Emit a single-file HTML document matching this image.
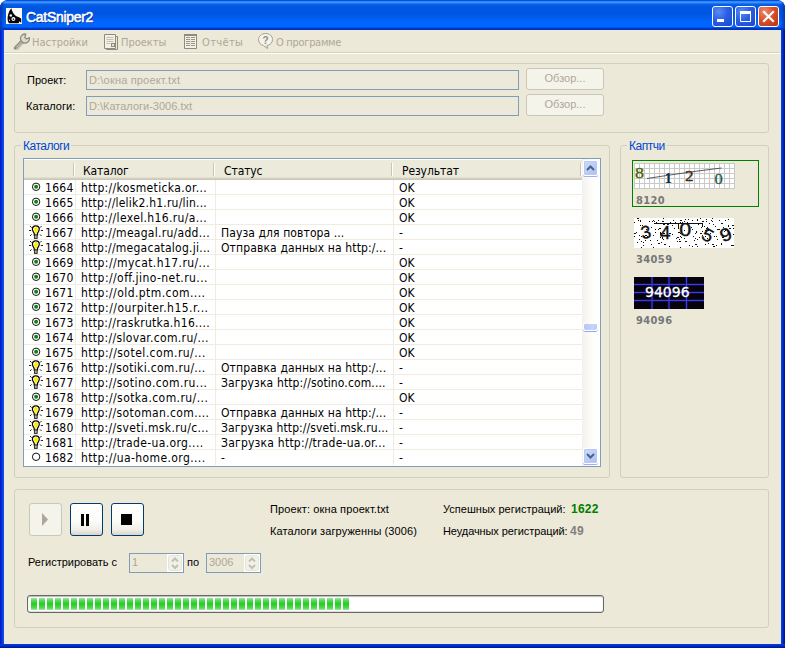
<!DOCTYPE html>
<html lang="ru"><head><meta charset="utf-8"><title>CatSniper2</title>
<style>
*{box-sizing:border-box;margin:0;padding:0}
html,body{width:785px;height:648px;overflow:hidden;background:#fff}
body{position:relative;font-family:"Liberation Sans",sans-serif;font-size:11px;color:#000}
.abs{position:absolute}
#win{position:absolute;left:0;top:0;width:785px;height:648px;background:#0831d9;border-radius:8px 8px 0 0;overflow:hidden}
#title{position:absolute;left:0;top:0;width:785px;height:30px;border-radius:8px 8px 0 0;
background:linear-gradient(to bottom,#0046dc 0,#0a52e0 .8px,#3088f8 1.500px,#409aff 2.300px,#2a84f8 3px,#0c66ea 4px,#035be3 5px,#0055e0 8px,#0056e3 14px,#0060f2 19px,#0066ff 22.500px,#0065fd 26.500px,#0054ea 27.500px,#0036c6 28.500px,#002fbe 30px)}
#title:before{content:"";position:absolute;left:0;top:0;width:5px;height:30px;background:linear-gradient(to right,#0138b8,rgba(20,90,230,0));border-radius:8px 0 0 0}
#title:after{content:"";position:absolute;right:0;top:0;width:5px;height:30px;background:linear-gradient(to left,#0138b8,rgba(20,90,230,0));border-radius:0 8px 0 0}
#ttext{position:absolute;left:26px;top:9px;font:14px/16px "Liberation Sans",sans-serif;color:#fff;-webkit-text-stroke:.55px #fff;text-shadow:1px 1px 0 #0a1f80;letter-spacing:-.3px;white-space:nowrap}
#client{position:absolute;left:4px;top:30px;width:777px;height:614px;background:#ece9d8}
#bl{position:absolute;left:0;top:30px;width:4px;height:618px;background:linear-gradient(to right,#0019cf,#0733dc 50%,#1a55ea)}
#br{position:absolute;right:0;top:30px;width:4px;height:618px;background:linear-gradient(to left,#00138c 0,#001a9e 30%,#0034d4 60%,#0644ea 100%)}
#bb{position:absolute;left:0;bottom:0;width:785px;height:4px;background:linear-gradient(to bottom,#0540e0,#0029c8 50%,#00138c)}
.tb{position:absolute;top:6px;width:21px;height:21px;border:1px solid #fff;border-radius:3px;background:radial-gradient(circle at 30% 25%,#5a8cf5 0,#2a5fe4 45%,#1a46cf 100%)}
.tb.x{background:radial-gradient(circle at 30% 25%,#ee8b6c 0,#d9512c 45%,#b93210 100%)}
#tbar{position:absolute;left:4px;top:30px;width:777px;height:24px;background:#ece9d8;border-bottom:1px solid #fff}
#tbar:after{content:"";position:absolute;left:0;bottom:0;width:100%;height:1px;background:#d8d4c4}
.tl{position:absolute;top:36px;color:#aca899;font:11px "DejaVu Sans Condensed","DejaVu Sans",sans-serif;white-space:nowrap}
.gb{position:absolute;border:1px solid #d0d0bf;border-radius:3px}
.lg{position:absolute;background:#ece9d8;color:#0046d5;padding:0 2px;white-space:nowrap;font-size:12px;letter-spacing:-.5px}
.inp{position:absolute;height:20px;border:1px solid #7f9db9;background:#ece9d8;color:#aca899;padding:3px 0 0 2px;white-space:nowrap}
.btn{position:absolute;width:78px;height:22px;border:1px solid #c9c7ba;border-radius:3px;background:#f5f4ea;color:#aca899;text-align:center;padding-top:3px}
.lb{position:absolute;white-space:nowrap}
#lv{position:absolute;left:23px;top:158px;width:578px;height:309px;border:1px solid #7f9db9;background:#fff}
#hdr{position:absolute;left:24px;top:160px;width:558px;height:20px;background:#ebeadb;border-bottom:1px solid #cbc7b8;box-shadow:inset 0 -1px 0 #d6d2c2,inset 0 -2px 0 #e2dece}
.hs{position:absolute;top:163px;width:2px;height:13px;border-left:1px solid #c7c5b2;border-right:1px solid #fff}
.ht{position:absolute;top:164px;font:12px "DejaVu Sans Condensed","DejaVu Sans",sans-serif;white-space:nowrap;letter-spacing:-.1px}
.row{position:absolute;left:24px;width:558px;height:15px;border-bottom:1px solid #f0ede0;font:12px "DejaVu Sans Condensed","DejaVu Sans",sans-serif}
.vl{position:absolute;top:180px;width:1px;height:285px;background:#f0ede0}
.c{position:absolute;top:1px;white-space:nowrap;line-height:14px}
.c0{letter-spacing:.3px}
.c0{left:21px}.c1{left:57px}.c2{left:197px}.c3{left:375px}
.ic{position:absolute}
#sb{position:absolute;left:582px;top:159px;width:18px;height:307px;background:linear-gradient(to right,#f3f1ec,#fefefb 60%,#fff)}
.sbb{position:absolute;left:583px;width:15px;height:16px;border-radius:2px;background:linear-gradient(135deg,#d0dcfd,#b8caf8 60%,#aebff0);border:1px solid #fff;box-shadow:0 0 0 1px #b9c9f3 inset,0 1px 0 #9db3ea}
.pbtn{position:absolute;top:503px;width:33px;height:33px;border:1px solid #003c74;border-radius:3px;background:linear-gradient(to bottom,#fff 0,#fbfbf8 55%,#f1f0e8 82%,#d9d4c8 100%)}
.pbtn.dis{border-color:#c9c7ba;background:#f5f4ea}
.spin{position:absolute;top:553px;width:55px;height:20px;border:1px solid #7f9db9;background:#ece9d8;color:#aca899;padding:2px 0 0 2px}
.spin b{position:absolute;right:0;top:0;width:16px;height:18px;background:#fff}
.spin b svg{position:absolute;left:1px;top:1px}
#pb{position:absolute;left:27px;top:595px;width:577px;height:18px;border:1px solid #686868;border-radius:3px;background:#fff;box-shadow:inset 0 1px 1px #bbb, inset 0 -1px 0 #ddd}
#pb i{position:absolute;top:2px;width:6px;height:12px;background:linear-gradient(to bottom,#9be89b 0,#4fd74f 25%,#22cc22 50%,#4fd74f 80%,#9be89b 100%)}
.cl{position:absolute;left:636px;font:bold 11px "DejaVu Sans Condensed","DejaVu Sans",sans-serif;color:#777;white-space:nowrap;letter-spacing:.4px}
</style></head><body>
<div id="win">
<div id="title"></div>
<div id="bl"></div><div id="br"></div><div id="bb"></div>
<div id="client"></div>
<!-- app icon -->
<svg class="abs" style="left:6px;top:8px" width="16" height="16" viewBox="0 0 16 16"><rect width="16" height="16" fill="#fbfaf6"/><path d="M5.300 .3C6 3 7.500 6.500 10 8c2 1.200 4 1.600 5.200 2.500V15l-1.700-1.800-1 2H3C1.500 13.500 1.300 11 1.800 8S3.800 2 5.300 .3z" fill="#050505"/><circle cx="4.800" cy="7.600" r="1.250" fill="#f4f4f4"/><circle cx="7.400" cy="10.900" r="2" fill="#f4f4f4"/><circle cx="7.400" cy="11.200" r=".8" fill="#111"/><circle cx="3.500" cy="12.200" r=".6" fill="#eee"/></svg>
<div id="ttext">CatSniper2</div>
<div class="tb" style="left:712px"><svg width="19" height="19"><rect x="4" y="12" width="7" height="3" fill="#fff"/></svg></div>
<div class="tb" style="left:735px"><svg width="19" height="19"><path d="M4.500 5.500h10v9h-10z" fill="none" stroke="#fff" stroke-width="1"/><rect x="4" y="4" width="11" height="3" fill="#fff"/></svg></div>
<div class="tb x" style="left:758px"><svg width="19" height="19"><path d="M5 5l9 9M14 5l-9 9" stroke="#fff" stroke-width="2.200" stroke-linecap="square"/></svg></div>

<div id="tbar"></div>
<!-- toolbar icons -->
<svg class="abs" style="left:13px;top:33px" width="18" height="17" viewBox="0 0 18 17"><path d="M2.500 15.500l6.500-7" stroke="#c4c1b2" stroke-width="3.400" stroke-linecap="round" fill="none" transform="translate(.8,.6)"/><path d="M2 15l6.800-7" stroke="#8f8d82" stroke-width="2.600" stroke-linecap="round" fill="none"/><path d="M3 14.500l5.800-6" stroke="#cfccbe" stroke-width="1" fill="none"/><path d="M12.800 1.100A4.500 4.500 0 1 0 16.400 4.700L13.400 6 11.800 4.300z" fill="#dedbcd" stroke="#8f8d82" stroke-width="1.300" stroke-linejoin="round"/></svg>
<div class="tl" style="left:32px">Настройки</div>
<svg class="abs" style="left:103px;top:33px" width="17" height="17" viewBox="0 0 17 17"><path d="M1.500 1.500h11v14h-11z" fill="#f3f1e6" stroke="#8f8c7e"/><path d="M12.500 3.500h2v13h-11v-1" fill="none" stroke="#8f8c7e"/><path d="M3.500 4.500h7M3.500 6.500h7M3.500 8.500h7M3.500 10.500h4" stroke="#c5c2b3"/><rect x="8.500" y="10.500" width="3" height="3" fill="#e6e3d4" stroke="#8f8c7e"/></svg>
<div class="tl" style="left:121px">Проекты</div>
<svg class="abs" style="left:183px;top:33px" width="15" height="17" viewBox="0 0 15 17"><path d="M1.500 1.500h12v14h-12z" fill="#f3f1e6" stroke="#8f8c7e"/><path d="M3 4.500h9M3 6.500h9M3 8.500h9M3 10.500h9M3 12.500h9" stroke="#9a9788"/><path d="M7.500 4v9" stroke="#e8e5d6"/><rect x="1" y="1" width="13" height="2" fill="#8f8c7e"/></svg>
<div class="tl" style="left:202px;letter-spacing:.35px">Отчёты</div>
<svg class="abs" style="left:257px;top:32px" width="17" height="18" viewBox="0 0 17 18"><path d="M8.500 1.500c4 0 7 2.500 7 6s-2.500 5.500-5.500 6l.5 3-4-3c-3-.5-5-3-5-6s3-6 7-6z" fill="#f6f4ea" stroke="#a09d8e"/><text x="8.500" y="12" text-anchor="middle" font-family="Liberation Sans,sans-serif" font-weight="bold" font-size="10" fill="#8f8c7e">?</text></svg>
<div class="tl" style="left:276px;letter-spacing:-.3px">О программе</div>

<!-- group 1 -->
<div class="gb" style="left:14px;top:63px;width:755px;height:70px"></div>
<div class="lb" style="left:27px;top:74px">Проект:</div>
<div class="lb" style="left:26px;top:100px">Каталоги:</div>
<div class="inp" style="left:86px;top:70px;width:433px;letter-spacing:.18px">D:\окна проект.txt</div>
<div class="inp" style="left:86px;top:96px;width:433px">D:\Каталоги-3006.txt</div>
<div class="btn" style="left:526px;top:68px">Обзор...</div>
<div class="btn" style="left:526px;top:94px">Обзор...</div>

<!-- group 2 -->
<div class="gb" style="left:14px;top:145px;width:596px;height:333px"></div>
<div class="lg" style="left:21px;top:139px">Каталоги</div>
<div id="lv"></div>
<div id="hdr"></div>
<div class="hs" style="left:73px"></div><div class="hs" style="left:213px"></div><div class="hs" style="left:391px"></div><div class="hs" style="left:580px"></div>
<div class="ht" style="left:83px">Каталог</div><div class="ht" style="left:224px">Статус</div><div class="ht" style="left:402px">Результат</div>
<div class="row" style="top:180px"><svg class="ic" style="left:7px;top:2px" width="10" height="10" viewBox="0 0 10 10"><circle cx="5.100" cy="4.800" r="3.700" fill="#fff" stroke="#111" stroke-width="1"/><circle cx="5.100" cy="4.800" r="2" fill="#0a860a"/></svg><span class="c c0">1664</span><span class="c c1" style="letter-spacing:0.359px">http://kosmeticka.or...</span><span class="c c3">OK</span></div>
<div class="row" style="top:195px"><svg class="ic" style="left:7px;top:2px" width="10" height="10" viewBox="0 0 10 10"><circle cx="5.100" cy="4.800" r="3.700" fill="#fff" stroke="#111" stroke-width="1"/><circle cx="5.100" cy="4.800" r="2" fill="#0a860a"/></svg><span class="c c0">1665</span><span class="c c1" style="letter-spacing:0.210px">http://lelik2.h1.ru/lin...</span><span class="c c3">OK</span></div>
<div class="row" style="top:210px"><svg class="ic" style="left:7px;top:2px" width="10" height="10" viewBox="0 0 10 10"><circle cx="5.100" cy="4.800" r="3.700" fill="#fff" stroke="#111" stroke-width="1"/><circle cx="5.100" cy="4.800" r="2" fill="#0a860a"/></svg><span class="c c0">1666</span><span class="c c1" style="letter-spacing:0.363px">http://lexel.h16.ru/a...</span><span class="c c3">OK</span></div>
<div class="row" style="top:225px"><svg class="ic" style="left:4px;top:0px" width="16" height="15" viewBox="0 0 16 15"><path d="M2 1l1.600 1.600M13.600 1L12 2.600M1 5.500h2.200M12.800 5.500H15M2 11l1.600-1.600M13.600 11L12 9.400" stroke="#222" stroke-width="1" fill="none"/><path d="M7.800 .8c2.200 0 3.500 1.600 3.500 3.500 0 1.700-1.300 2.700-1.800 4.200V10H6.200V8.500C5.700 7 4.400 6 4.400 4.300c0-1.900 1.200-3.500 3.400-3.500z" fill="#fff" stroke="#000" stroke-width="1.200"/><path d="M7.800 1.500l2.300 2.100-.4 2.400-.9 1.600-.2 2H7V7L5.700 5l.9-2.400z" fill="#fbee08"/><rect x="6.400" y="10" width="2.800" height="3.400" fill="#aaa" stroke="#222" stroke-width=".9"/></svg><span class="c c0">1667</span><span class="c c1" style="letter-spacing:0.286px">http://meagal.ru/add...</span><span class="c c2" style="letter-spacing:0.100px">Пауза для повтора ...</span><span class="c c3">-</span></div>
<div class="row" style="top:240px"><svg class="ic" style="left:4px;top:0px" width="16" height="15" viewBox="0 0 16 15"><path d="M2 1l1.600 1.600M13.600 1L12 2.600M1 5.500h2.200M12.800 5.500H15M2 11l1.600-1.600M13.600 11L12 9.400" stroke="#222" stroke-width="1" fill="none"/><path d="M7.800 .8c2.200 0 3.500 1.600 3.500 3.500 0 1.700-1.300 2.700-1.800 4.200V10H6.200V8.500C5.700 7 4.400 6 4.400 4.300c0-1.900 1.200-3.500 3.400-3.500z" fill="#fff" stroke="#000" stroke-width="1.200"/><path d="M7.800 1.500l2.300 2.100-.4 2.400-.9 1.600-.2 2H7V7L5.700 5l.9-2.400z" fill="#fbee08"/><rect x="6.400" y="10" width="2.800" height="3.400" fill="#aaa" stroke="#222" stroke-width=".9"/></svg><span class="c c0">1668</span><span class="c c1" style="letter-spacing:0.250px">http://megacatalog.ji...</span><span class="c c2" style="letter-spacing:0.128px">Отправка данных на http:/...</span><span class="c c3">-</span></div>
<div class="row" style="top:255px"><svg class="ic" style="left:7px;top:2px" width="10" height="10" viewBox="0 0 10 10"><circle cx="5.100" cy="4.800" r="3.700" fill="#fff" stroke="#111" stroke-width="1"/><circle cx="5.100" cy="4.800" r="2" fill="#0a860a"/></svg><span class="c c0">1669</span><span class="c c1" style="letter-spacing:0.423px">http://mycat.h17.ru/...</span><span class="c c3">OK</span></div>
<div class="row" style="top:270px"><svg class="ic" style="left:7px;top:2px" width="10" height="10" viewBox="0 0 10 10"><circle cx="5.100" cy="4.800" r="3.700" fill="#fff" stroke="#111" stroke-width="1"/><circle cx="5.100" cy="4.800" r="2" fill="#0a860a"/></svg><span class="c c0">1670</span><span class="c c1" style="letter-spacing:0.433px">http://off.jino-net.ru...</span><span class="c c3">OK</span></div>
<div class="row" style="top:285px"><svg class="ic" style="left:7px;top:2px" width="10" height="10" viewBox="0 0 10 10"><circle cx="5.100" cy="4.800" r="3.700" fill="#fff" stroke="#111" stroke-width="1"/><circle cx="5.100" cy="4.800" r="2" fill="#0a860a"/></svg><span class="c c0">1671</span><span class="c c1" style="letter-spacing:0.440px">http://old.ptm.com....</span><span class="c c3">OK</span></div>
<div class="row" style="top:300px"><svg class="ic" style="left:7px;top:2px" width="10" height="10" viewBox="0 0 10 10"><circle cx="5.100" cy="4.800" r="3.700" fill="#fff" stroke="#111" stroke-width="1"/><circle cx="5.100" cy="4.800" r="2" fill="#0a860a"/></svg><span class="c c0">1672</span><span class="c c1" style="letter-spacing:0.476px">http://ourpiter.h15.r...</span><span class="c c3">OK</span></div>
<div class="row" style="top:315px"><svg class="ic" style="left:7px;top:2px" width="10" height="10" viewBox="0 0 10 10"><circle cx="5.100" cy="4.800" r="3.700" fill="#fff" stroke="#111" stroke-width="1"/><circle cx="5.100" cy="4.800" r="2" fill="#0a860a"/></svg><span class="c c0">1673</span><span class="c c1" style="letter-spacing:0.293px">http://raskrutka.h16....</span><span class="c c3">OK</span></div>
<div class="row" style="top:330px"><svg class="ic" style="left:7px;top:2px" width="10" height="10" viewBox="0 0 10 10"><circle cx="5.100" cy="4.800" r="3.700" fill="#fff" stroke="#111" stroke-width="1"/><circle cx="5.100" cy="4.800" r="2" fill="#0a860a"/></svg><span class="c c0">1674</span><span class="c c1" style="letter-spacing:0.337px">http://slovar.com.ru/...</span><span class="c c3">OK</span></div>
<div class="row" style="top:345px"><svg class="ic" style="left:7px;top:2px" width="10" height="10" viewBox="0 0 10 10"><circle cx="5.100" cy="4.800" r="3.700" fill="#fff" stroke="#111" stroke-width="1"/><circle cx="5.100" cy="4.800" r="2" fill="#0a860a"/></svg><span class="c c0">1675</span><span class="c c1" style="letter-spacing:0.459px">http://sotel.com.ru/...</span><span class="c c3">OK</span></div>
<div class="row" style="top:360px"><svg class="ic" style="left:4px;top:0px" width="16" height="15" viewBox="0 0 16 15"><path d="M2 1l1.600 1.600M13.600 1L12 2.600M1 5.500h2.200M12.800 5.500H15M2 11l1.600-1.600M13.600 11L12 9.400" stroke="#222" stroke-width="1" fill="none"/><path d="M7.800 .8c2.200 0 3.500 1.600 3.500 3.500 0 1.700-1.300 2.700-1.800 4.200V10H6.200V8.500C5.700 7 4.400 6 4.400 4.300c0-1.900 1.200-3.500 3.400-3.500z" fill="#fff" stroke="#000" stroke-width="1.200"/><path d="M7.800 1.500l2.300 2.100-.4 2.400-.9 1.600-.2 2H7V7L5.700 5l.9-2.400z" fill="#fbee08"/><rect x="6.400" y="10" width="2.800" height="3.400" fill="#aaa" stroke="#222" stroke-width=".9"/></svg><span class="c c0">1676</span><span class="c c1" style="letter-spacing:0.320px">http://sotiki.com.ru/...</span><span class="c c2" style="letter-spacing:0.128px">Отправка данных на http:/...</span><span class="c c3">-</span></div>
<div class="row" style="top:375px"><svg class="ic" style="left:4px;top:0px" width="16" height="15" viewBox="0 0 16 15"><path d="M2 1l1.600 1.600M13.600 1L12 2.600M1 5.500h2.200M12.800 5.500H15M2 11l1.600-1.600M13.600 11L12 9.400" stroke="#222" stroke-width="1" fill="none"/><path d="M7.800 .8c2.200 0 3.500 1.600 3.500 3.500 0 1.700-1.300 2.700-1.800 4.200V10H6.200V8.500C5.700 7 4.400 6 4.400 4.300c0-1.900 1.200-3.500 3.400-3.500z" fill="#fff" stroke="#000" stroke-width="1.200"/><path d="M7.800 1.500l2.300 2.100-.4 2.400-.9 1.600-.2 2H7V7L5.700 5l.9-2.400z" fill="#fbee08"/><rect x="6.400" y="10" width="2.800" height="3.400" fill="#aaa" stroke="#222" stroke-width=".9"/></svg><span class="c c0">1677</span><span class="c c1" style="letter-spacing:0.395px">http://sotino.com.ru...</span><span class="c c2" style="letter-spacing:0.129px">Загрузка http://sotino.com....</span><span class="c c3">-</span></div>
<div class="row" style="top:390px"><svg class="ic" style="left:7px;top:2px" width="10" height="10" viewBox="0 0 10 10"><circle cx="5.100" cy="4.800" r="3.700" fill="#fff" stroke="#111" stroke-width="1"/><circle cx="5.100" cy="4.800" r="2" fill="#0a860a"/></svg><span class="c c0">1678</span><span class="c c1" style="letter-spacing:0.432px">http://sotka.com.ru/...</span><span class="c c3">OK</span></div>
<div class="row" style="top:405px"><svg class="ic" style="left:4px;top:0px" width="16" height="15" viewBox="0 0 16 15"><path d="M2 1l1.600 1.600M13.600 1L12 2.600M1 5.500h2.200M12.800 5.500H15M2 11l1.600-1.600M13.600 11L12 9.400" stroke="#222" stroke-width="1" fill="none"/><path d="M7.800 .8c2.200 0 3.500 1.600 3.500 3.500 0 1.700-1.300 2.700-1.800 4.200V10H6.200V8.500C5.700 7 4.400 6 4.400 4.300c0-1.900 1.200-3.500 3.400-3.500z" fill="#fff" stroke="#000" stroke-width="1.200"/><path d="M7.800 1.500l2.300 2.100-.4 2.400-.9 1.600-.2 2H7V7L5.700 5l.9-2.400z" fill="#fbee08"/><rect x="6.400" y="10" width="2.800" height="3.400" fill="#aaa" stroke="#222" stroke-width=".9"/></svg><span class="c c0">1679</span><span class="c c1" style="letter-spacing:0.364px">http://sotoman.com....</span><span class="c c2" style="letter-spacing:0.128px">Отправка данных на http:/...</span><span class="c c3">-</span></div>
<div class="row" style="top:420px"><svg class="ic" style="left:4px;top:0px" width="16" height="15" viewBox="0 0 16 15"><path d="M2 1l1.600 1.600M13.600 1L12 2.600M1 5.500h2.200M12.800 5.500H15M2 11l1.600-1.600M13.600 11L12 9.400" stroke="#222" stroke-width="1" fill="none"/><path d="M7.800 .8c2.200 0 3.500 1.600 3.500 3.500 0 1.700-1.300 2.700-1.800 4.200V10H6.200V8.500C5.700 7 4.400 6 4.400 4.300c0-1.900 1.200-3.500 3.400-3.500z" fill="#fff" stroke="#000" stroke-width="1.200"/><path d="M7.800 1.500l2.300 2.100-.4 2.400-.9 1.600-.2 2H7V7L5.700 5l.9-2.400z" fill="#fbee08"/><rect x="6.400" y="10" width="2.800" height="3.400" fill="#aaa" stroke="#222" stroke-width=".9"/></svg><span class="c c0">1680</span><span class="c c1" style="letter-spacing:0.354px">http://sveti.msk.ru/c...</span><span class="c c2" style="letter-spacing:0.090px">Загрузка http://sveti.msk.ru...</span><span class="c c3">-</span></div>
<div class="row" style="top:435px"><svg class="ic" style="left:4px;top:0px" width="16" height="15" viewBox="0 0 16 15"><path d="M2 1l1.600 1.600M13.600 1L12 2.600M1 5.500h2.200M12.800 5.500H15M2 11l1.600-1.600M13.600 11L12 9.400" stroke="#222" stroke-width="1" fill="none"/><path d="M7.800 .8c2.200 0 3.500 1.600 3.500 3.500 0 1.700-1.300 2.700-1.800 4.200V10H6.200V8.500C5.700 7 4.400 6 4.400 4.300c0-1.900 1.200-3.500 3.400-3.500z" fill="#fff" stroke="#000" stroke-width="1.200"/><path d="M7.800 1.500l2.300 2.100-.4 2.400-.9 1.600-.2 2H7V7L5.700 5l.9-2.400z" fill="#fbee08"/><rect x="6.400" y="10" width="2.800" height="3.400" fill="#aaa" stroke="#222" stroke-width=".9"/></svg><span class="c c0">1681</span><span class="c c1" style="letter-spacing:0.368px">http://trade-ua.org....</span><span class="c c2" style="letter-spacing:0.233px">Загрузка http://trade-ua.or...</span><span class="c c3">-</span></div>
<div class="row" style="top:450px;border-bottom-color:#fff"><svg class="ic" style="left:7px;top:2px" width="10" height="10" viewBox="0 0 10 10"><circle cx="5.100" cy="4.800" r="3.700" fill="#fff" stroke="#111" stroke-width="1"/></svg><span class="c c0">1682</span><span class="c c1" style="letter-spacing:0.393px">http://ua-home.org....</span><span class="c c2" style="letter-spacing:0.150px">-</span><span class="c c3">-</span></div>

<div class="vl" style="left:75px"></div><div class="vl" style="left:215px"></div><div class="vl" style="left:393px"></div>
<div id="sb"></div>
<div class="sbb" style="top:160px"><svg width="13" height="14"><path d="M3 9l3.500-3.500L10 9" fill="none" stroke="#4d6185" stroke-width="2"/></svg></div>
<div class="sbb" style="top:448px"><svg width="13" height="14"><path d="M3 5l3.500 3.500L10 5" fill="none" stroke="#4d6185" stroke-width="2"/></svg></div>
<div class="abs" style="left:583px;top:324px;width:15px;height:7px;border-radius:2px 2px 3px 3px;background:linear-gradient(to right,#b5c5f6,#c6d4fb 70%,#b9c9f8);border:1px solid #fff;border-top:0;box-shadow:0 1px 0 #8fa9e6"></div>

<!-- group 3 -->
<div class="gb" style="left:620px;top:145px;width:149px;height:333px"></div>
<div class="lg" style="left:627px;top:139px">Каптчи</div>
<div class="abs" style="left:632px;top:160px;width:127px;height:47px;border:1px solid #008000"></div>
<svg class="abs" style="left:634px;top:163px" width="101" height="26" viewBox="0 0 101 26"><rect width="101" height="26" fill="#fff"/><path d="M0.5 0v26M5.5 0v26M10.5 0v26M15.5 0v26M20.5 0v26M25.5 0v26M30.5 0v26M35.5 0v26M40.5 0v26M45.5 0v26M50.5 0v26M55.5 0v26M60.5 0v26M65.5 0v26M70.5 0v26M75.5 0v26M80.5 0v26M85.5 0v26M90.5 0v26M95.5 0v26M100.5 0v26M0 0.5h101M0 5.5h101M0 10.5h101M0 15.5h101M0 20.5h101M0 25.5h101" stroke="#c9c9c9" stroke-width="1" fill="none"/><path d="M13 15.500L34 12.300L60 8.500L87.500 5" stroke="#333" stroke-width=".8" fill="none"/><g font-family="Liberation Serif,serif" font-size="15"><text transform="translate(1,15) scale(1.200,1)" fill="#4a5f00" stroke="#4a5f00" stroke-width=".3">8</text><text x="30.500" y="20" fill="#0b2e4f" font-weight="bold">1</text><text transform="translate(51,18) scale(1.150,1)" fill="#3f2a10" stroke="#3f2a10" stroke-width=".3">2</text><text transform="translate(80.500,20.500) scale(1.100,.95)" fill="#1e5a45" stroke="#1e5a45" stroke-width=".3">0</text></g></svg>
<div class="cl" style="top:194px">8120</div>
<svg class="abs" style="left:634px;top:218px" width="100" height="30" viewBox="0 0 100 30"><rect width="100" height="30" fill="#fff"/><path d="M41 4.5h1M50 20.5h1M6 2.5h1M68 3.5h1M46 18.5h1M7 29.5h1M64 6.5h1M4 2.5h1M55 13.5h1M8 7.5h1M11 17.5h1M54 1.5h1M72 3.5h1M28 20.5h1M80 18.5h1M7 18.5h1M74 12.5h1M6 7.5h1M5 17.5h1M17 9.5h1M53 4.5h1M69 3.5h1M73 9.5h1M71 26.5h1M87 5.5h1M13 18.5h1M73 20.5h1M24 11.5h1M12 17.5h1M91 2.5h1M72 1.5h1M79 6.5h1M63 21.5h1M68 13.5h1M99 10.5h1M59 18.5h1M58 11.5h1M38 7.5h1M23 22.5h1M99 7.5h1M10 18.5h1M38 16.5h1M63 28.5h1M43 23.5h1M57 9.5h1M77 2.5h1M15 16.5h1M53 5.5h1M96 10.5h1M19 29.5h1M62 13.5h1M5 21.5h1M9 24.5h1M71 18.5h1M40 10.5h1M88 11.5h1M76 15.5h1M74 25.5h1M58 2.5h1M11 8.5h1M60 22.5h1M85 2.5h1M7 23.5h1M89 9.5h1M82 18.5h1M87 26.5h1M57 9.5h1M91 12.5h1M85 11.5h1M2 14.5h1M45 5.5h1M78 3.5h1M63 1.5h1M27 24.5h1M36 4.5h1M94 7.5h1M50 12.5h1M63 2.5h1M21 14.5h1M51 17.5h1M35 28.5h1M17 26.5h1M55 27.5h1M70 8.5h1M90 13.5h1M45 21.5h1M48 7.5h1M19 2.5h1M22 4.5h1M29 21.5h1M29 0.5h1M62 26.5h1M75 5.5h1M33 9.5h1M0 4.5h1M53 17.5h1M47 19.5h1M72 10.5h1M16 22.5h1M65 19.5h1M83 21.5h1M94 1.5h1M58 28.5h1M99 27.5h1M87 25.5h1M71 12.5h1M50 12.5h1M50 3.5h1M61 20.5h1M51 1.5h1M24 2.5h1M26 14.5h1M20 3.5h1M43 19.5h1M6 3.5h1M0 18.5h1M19 17.5h1M12 11.5h1M78 0.5h1M9 27.5h1M26 19.5h1M48 4.5h1M81 8.5h1M44 19.5h1M46 15.5h1M15 3.5h1M62 14.5h1M61 15.5h1M39 2.5h1M18 3.5h1M95 10.5h1M94 8.5h1M61 26.5h1M88 5.5h1M66 0.5h1M26 16.5h1M46 4.5h1M88 17.5h1M3 24.5h1M67 9.5h1M82 27.5h1M11 22.5h1M33 16.5h1M46 29.5h1M21 11.5h1M98 7.5h1M68 17.5h1M99 16.5h1M42 20.5h1M28 19.5h1M97 27.5h2M24 25.5h2M30 26.5h2M51 23.5h2M29 6.5h2M66 15.5h2M45 23.5h2M3 0.5h2M35 15.5h2M33 6.5h2M88 19.5h2M44 14.5h2M92 11.5h2M46 2.5h2M28 3.5h2M29 15.5h2M25 10.5h2M26 15.5h2M79 28.5h2M78 26.5h2M0 15.5h2M83 11.5h2" stroke="#111" stroke-width="1" fill="none"/><path d="M20 5.500h49M44.500 5v6M68.500 5v4" stroke="#111" stroke-width="1" fill="none"/><g font-family="Liberation Sans,sans-serif" font-size="18" fill="#111" stroke="#111" stroke-width=".35"><text transform="translate(11.7,13.8) rotate(-12) scale(1,1)" x="0" y="6.450" text-anchor="middle">3</text><text transform="translate(31.3,14.5) rotate(0) scale(1.05,1)" x="0" y="6.450" text-anchor="middle">4</text><text transform="translate(51.3,11.7) rotate(0) scale(1.2,1)" x="0" y="6.450" text-anchor="middle">0</text><text transform="translate(74,17) rotate(28) scale(1.05,1)" x="0" y="6.450" text-anchor="middle">5</text><text transform="translate(91.6,16.3) rotate(-22) scale(1.15,1)" x="0" y="6.450" text-anchor="middle">9</text></g></svg>
<div class="cl" style="top:253px">34059</div>
<svg class="abs" style="left:634px;top:277px" width="70" height="32" viewBox="0 0 70 32"><rect width="70" height="32" fill="#06030c"/><path d="M18 0v32M35 0v32M52.500 0v32M0 7.500h70M0 15.500h70M0 23.500h70" stroke="#2222a0" stroke-width="2.600" opacity=".5" fill="none"/><path d="M18 0v32M35 0v32M52.500 0v32M0 7.500h70M0 15.500h70M0 23.500h70" stroke="#3c3cea" stroke-width="1" fill="none"/><text x="11" y="20" font-family="DejaVu Sans,sans-serif" font-size="14" fill="#fff" stroke="#fff" stroke-width=".3">94096</text></svg>
<div class="cl" style="top:314px">94096</div>

<!-- group 4 -->
<div class="gb" style="left:14px;top:489px;width:755px;height:139px"></div>
<div class="pbtn dis" style="left:29px"><svg width="31" height="31"><path d="M12 9l6 6.500-6 6.500z" fill="#aca899"/></svg></div>
<div class="pbtn" style="left:70px"><svg width="31" height="31"><rect x="10" y="10" width="3" height="12" fill="#000"/><rect x="15" y="10" width="3" height="12" fill="#000"/></svg></div>
<div class="pbtn" style="left:111px"><svg width="31" height="31"><rect x="9" y="10" width="11" height="11" fill="#000"/></svg></div>
<div class="lb" style="left:270px;top:503px;letter-spacing:.12px">Проект: окна проект.txt</div>
<div class="lb" style="left:270px;top:525px;letter-spacing:.1px">Каталоги загруженны (3006)</div>
<div class="lb" style="left:443px;top:503px;letter-spacing:.03px">Успешных регистраций:</div>
<div class="lb" style="left:571px;top:502px;font:bold 12px 'Liberation Sans',sans-serif;color:#008000;letter-spacing:.25px">1622</div>
<div class="lb" style="left:443px;top:525px;letter-spacing:-.09px">Неудачных регистраций:</div>
<div class="lb" style="left:570px;top:524px;font:bold 12px 'Liberation Sans',sans-serif;color:#808080;letter-spacing:.3px">49</div>
<div class="lb" style="left:28px;top:556px">Регистрировать с</div>
<div class="spin" style="left:129px">1<b><svg width="14" height="16"><rect x=".5" y=".5" width="13" height="15" rx="2" fill="#f2f1e8" stroke="#e6e4d8"/><path d="M4 6.500l3-3 3 3M4 10l3 3 3-3" fill="none" stroke="#c2c0b1" stroke-width="2"/></svg></b></div>
<div class="lb" style="left:187px;top:556px">по</div>
<div class="spin" style="left:206px">3006<b><svg width="14" height="16"><rect x=".5" y=".5" width="13" height="15" rx="2" fill="#f2f1e8" stroke="#e6e4d8"/><path d="M4 6.500l3-3 3 3M4 10l3 3 3-3" fill="none" stroke="#c2c0b1" stroke-width="2"/></svg></b></div>
<div id="pb"><i style="left:3px"></i><i style="left:11px"></i><i style="left:19px"></i><i style="left:27px"></i><i style="left:35px"></i><i style="left:43px"></i><i style="left:51px"></i><i style="left:59px"></i><i style="left:67px"></i><i style="left:75px"></i><i style="left:83px"></i><i style="left:91px"></i><i style="left:99px"></i><i style="left:107px"></i><i style="left:115px"></i><i style="left:123px"></i><i style="left:131px"></i><i style="left:139px"></i><i style="left:147px"></i><i style="left:155px"></i><i style="left:163px"></i><i style="left:171px"></i><i style="left:179px"></i><i style="left:187px"></i><i style="left:195px"></i><i style="left:203px"></i><i style="left:211px"></i><i style="left:219px"></i><i style="left:227px"></i><i style="left:235px"></i><i style="left:243px"></i><i style="left:251px"></i><i style="left:259px"></i><i style="left:267px"></i><i style="left:275px"></i><i style="left:283px"></i><i style="left:291px"></i><i style="left:299px"></i><i style="left:307px"></i><i style="left:315px"></i></div>
</div>
</body></html>
